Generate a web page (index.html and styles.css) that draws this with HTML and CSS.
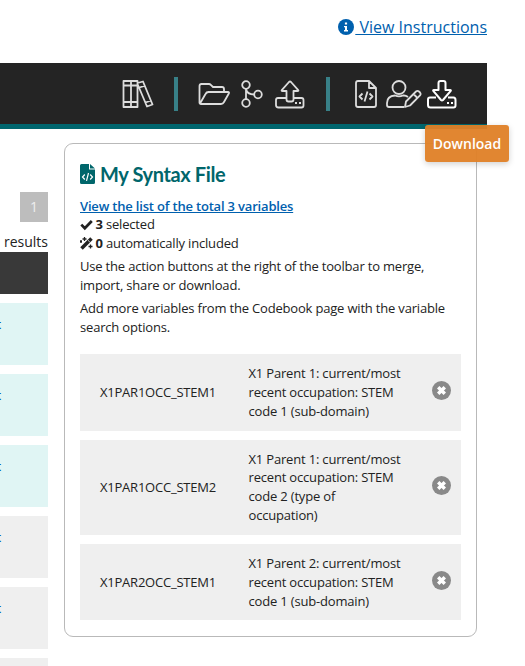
FILE: index.html
```html
<!DOCTYPE html>
<html lang="en">
<head>
<meta charset="utf-8">
<title>Codebook</title>
<link rel="stylesheet" href="styles.css">
</head>
<body>
<div class="instructions">
  <svg class="info" viewBox="0 0 16 16"><circle cx="8" cy="8" r="8" fill="#0060ae"/><path d="M6 7h3v4h1v1.500H6V11h1V8.300H6zM6.900 3.500h2.200v2H6.900z" fill="#fff"/></svg><a href="#">&nbsp;View Instructions</a>
</div>
<header class="toolbar">
  <svg class="books" viewBox="0 0 32 28"><path d="M1.500 1H9v26H1.500zM9 1h6.500v26H9zM1.500 5.500h14M1.500 22h14M15.500 3l5.500-1.500 9.500 23-5.500 2L15.500 4M17.500 7.500l5.500-1.800M23.500 22.500l5.500-2"/></svg>
  <span class="divider first"></span>
  <svg class="folder" viewBox="0 0 32 22"><path d="M1.500 20V3q0-2 2-2H11q1 0 1.800.8L15 4h9q2 0 2 2v3M2 20.500L7.500 11q1-2 3-2H30q1.500 0 .8 1.500L26 19q-1 2-3 2H3q-1.500 0-1.500-1.500"/></svg>
  <svg class="merge" viewBox="0 0 24 28"><circle cx="6" cy="5" r="3.800"/><circle cx="6" cy="23" r="3.800"/><circle cx="18" cy="14.500" r="3.800"/><path d="M6 8.800v10.400M6 9q1 5.500 8.200 5.500"/></svg>
  <svg class="upload" viewBox="0 0 30 29"><path d="M11.500 19.500V11H7.500q-1.500 0-.5-1.200L14 2q1-1 2 0l7 7.800q1 1.200-.5 1.200h-4v8.500q0 2-2 2h-3q-2 0-2-2zM11.500 18H3q-2 0-2 2v5q0 2.500 2.500 2.500h23q2 0 2-2V20q0-2-2-2h-8M20 23h2M24 23h2"/></svg>
  <span class="divider second"></span>
  <svg class="file" viewBox="0 0 22 28"><path d="M3 1h11l7 7v17q0 2-2 2H3q-2 0-2-2V3q0-2 2-2zM14 1v7h7M7.500 13.500L4.500 16.500l3 3M14.500 13.500l3 3-3 3M12.500 11.500l-3 10"/></svg>
  <svg class="user" viewBox="0 0 36 28"><circle cx="13" cy="7.500" r="6.500"/><path d="M22 17q-2-1.500-4-1.500h-1q-4 1.600-8 0Q1 16 1 23v2q0 2 2 2h15M19 27l1-5.500L30 11.500q1.500-1.300 3 0l1 1q1.200 1.500 0 2.800L24 25.500zM27.500 14l4 4"/></svg>
  <svg class="download" viewBox="0 0 30 29"><path d="M11.500 10V3q0-2 2-2h3q2 0 2 2v7h4.500q1.500 0 .5 1.200L16 20q-1 1-2 0l-7.500-8.800Q5.500 10 7 10zM9 17.500H3q-2 0-2 2V25q0 2.500 2.500 2.500h23q2 0 2-2V20q0-2.500-2-2.500H21M20 23h2M24 23h2"/></svg>
  <div class="tooltip">Download</div>
</header>
<div class="content">
  <section class="results">
    <div class="page">1</div>
    <div class="count">results</div>
    <div class="table-head"></div>
    <div class="result selected"><a href="#">t</a></div>
    <div class="result selected"><a href="#">t</a></div>
    <div class="result selected"><a href="#">t</a></div>
    <div class="result"><a href="#">t</a></div>
    <div class="result"><a href="#">t</a></div>
    <div class="result"></div>
  </section>
  <aside class="card">
    <h2><svg viewBox="0 0 15 20"><path d="M1.500 0H9v5.500h6v13q0 1.500-1.500 1.500h-12Q0 20 0 18.500v-17Q0 0 1.500 0zM10 0l5 4.500h-5z" fill="#00666b"/><path d="M4.800 10.500L2.500 13l2.300 2.500M10.200 10.500l2.300 2.500-2.300 2.500M8.500 9l-2 7.800" fill="none" stroke="#fff" stroke-width="1.200"/></svg><span>My Syntax File</span></h2>
    <a class="list-link" href="#">View the list of the total 3 variables</a>
    <div class="stat"><svg viewBox="0 0 13 13"><path d="M1.300 6.600l3.500 3.600L11.800 3" fill="none" stroke="#222" stroke-width="2.700"/></svg><span><b>3</b> selected</span></div>
    <div class="stat"><svg viewBox="0 0 13 13"><path d="M1.500 11.500L11.500 1.500" stroke="#222" stroke-width="3.500"/><path d="M8 3.300L9.800 5" stroke="#fff" stroke-width=".8"/><path d="M4.500 0v4M2.500 2h4M1 3v3M0 4.500h2M10.500 7.500v4M8.500 9.500h4" stroke="#222" stroke-width="1.300"/></svg><span><b>0</b> automatically included</span></div>
    <p>Use the action buttons at the right of the toolbar to merge, import, share or download.</p>
    <p>Add more variables from the Codebook page with the variable search options.</p>
    <div class="items">
      <div class="item"><span class="name">X1PAR1OCC_STEM1</span><span class="label">X1 Parent 1: current/most recent occupation: STEM code 1 (sub-domain)</span><svg viewBox="0 0 19 19"><circle cx="9.500" cy="9.500" r="9.500"/><path d="M6.200 6.200l6.600 6.600m0-6.600l-6.600 6.600"/></svg></div>
      <div class="item"><span class="name">X1PAR1OCC_STEM2</span><span class="label">X1 Parent 1: current/most recent occupation: STEM code 2 (type of occupation)</span><svg viewBox="0 0 19 19"><circle cx="9.500" cy="9.500" r="9.500"/><path d="M6.200 6.200l6.600 6.600m0-6.600l-6.600 6.600"/></svg></div>
      <div class="item"><span class="name">X1PAR2OCC_STEM1</span><span class="label">X1 Parent 2: current/most recent occupation: STEM code 1 (sub-domain)</span><svg viewBox="0 0 19 19"><circle cx="9.500" cy="9.500" r="9.500"/><path d="M6.200 6.200l6.600 6.600m0-6.600l-6.600 6.600"/></svg></div>
    </div>
  </aside>
</div>
</body>
</html>
```
FILE: styles.css
```css
* { box-sizing: border-box; }
body { margin: 0; height: 666px; overflow: hidden; background: #fff; color: #222; font: 13px/18.85px "Open Sans", sans-serif; }
a { color: #0060ae; }
.instructions { height: 63px; padding: 15px 38px 0 0; display: flex; justify-content: flex-end; align-items: flex-start; font-size: 16px; line-height: 24px; }
.info { width: 16px; height: 16px; margin: 4px 1px 0 0; }
.toolbar { position: relative; width: 487px; height: 66px; padding: 17px 0 0 122px; display: flex; align-items: flex-start; background: #242424; border-bottom: 5px solid #00666e; }
.toolbar svg { flex: none; fill: none; stroke: #ddd; stroke-width: 1.8; stroke-linejoin: round; }
.books { width: 32px; height: 28px; }
.divider { width: 4px; height: 34px; margin-top: -3px; background: #388087; }
.first { margin-left: 20px; }
.folder { width: 32px; height: 22px; margin: 3px 0 0 20px; }
.merge { width: 24px; height: 28px; margin-left: 10px; }
.upload { width: 30px; height: 29px; margin-left: 11px; }
.second { margin-left: 21px; }
.file { width: 22px; height: 28px; margin-left: 25px; }
.user { width: 36px; height: 28px; margin-left: 9px; }
.toolbar .download { width: 30px; height: 29px; margin-left: 5px; stroke: #fff; stroke-width: 2; }
.tooltip { position: absolute; left: 425px; top: 62px; z-index: 2; width: 84px; height: 37px; border-radius: 3px; background: rgba(223, 127, 38, .95); color: #fff; font-size: 14px; font-weight: 600; line-height: 38px; text-align: center; box-shadow: 0 2px 6px rgba(0, 0, 0, .18); }
.content { display: flex; align-items: flex-start; gap: 16px; }
.results { width: 48px; height: 537px; padding-top: 63px; overflow: hidden; }
.page { width: 28px; height: 30px; margin-left: 20px; background: #bdbdbd; color: #eee; font-size: 14px; line-height: 30px; text-align: center; }
.count { height: 30px; padding-top: 10px; font-size: 14px; line-height: 19px; text-align: right; }
.table-head { height: 42px; margin-bottom: 9px; background: #393939; }
.result { height: 62px; margin-bottom: 9px; padding-top: 12px; background: #efefef; }
.result a { display: block; margin-left: -4px; font-weight: 600; text-decoration: none; }
.selected { background: #e0f5f4; }
.card { width: 413px; height: 494px; margin-top: 14px; padding: 18px 15px 0; border: 1px solid #b9b9b9; border-radius: 9px; letter-spacing: -.185px; }
h2 { display: flex; align-items: center; gap: 5px; height: 25px; margin: 0; color: #00666b; font: 700 20px/25px Lato, sans-serif; letter-spacing: -.38px; }
h2 svg { width: 15px; height: 20px; margin-top: -1px; }
.list-link { display: block; width: max-content; margin-top: 9.6px; font-weight: 600; letter-spacing: -.185px; }
.stat { display: flex; align-items: center; gap: 2.5px; }
.stat svg { width: 13px; height: 13px; }
p { margin: 4.2px 0 0; }
.items { display: flex; flex-direction: column; gap: 9px; margin-top: 17.15px; }
.item { display: flex; align-items: center; padding: 10px 10px 10px 20px; background: #efefef; }
.name { width: 148.5px; letter-spacing: -.22px; }
.label { width: 156px; letter-spacing: -.18px; }
.item svg { width: 19px; height: 19px; margin: -3px 0 0 auto; }
.item circle { fill: #898989; }
.item path { fill: none; stroke: #fff; stroke-width: 3.4; }
```
